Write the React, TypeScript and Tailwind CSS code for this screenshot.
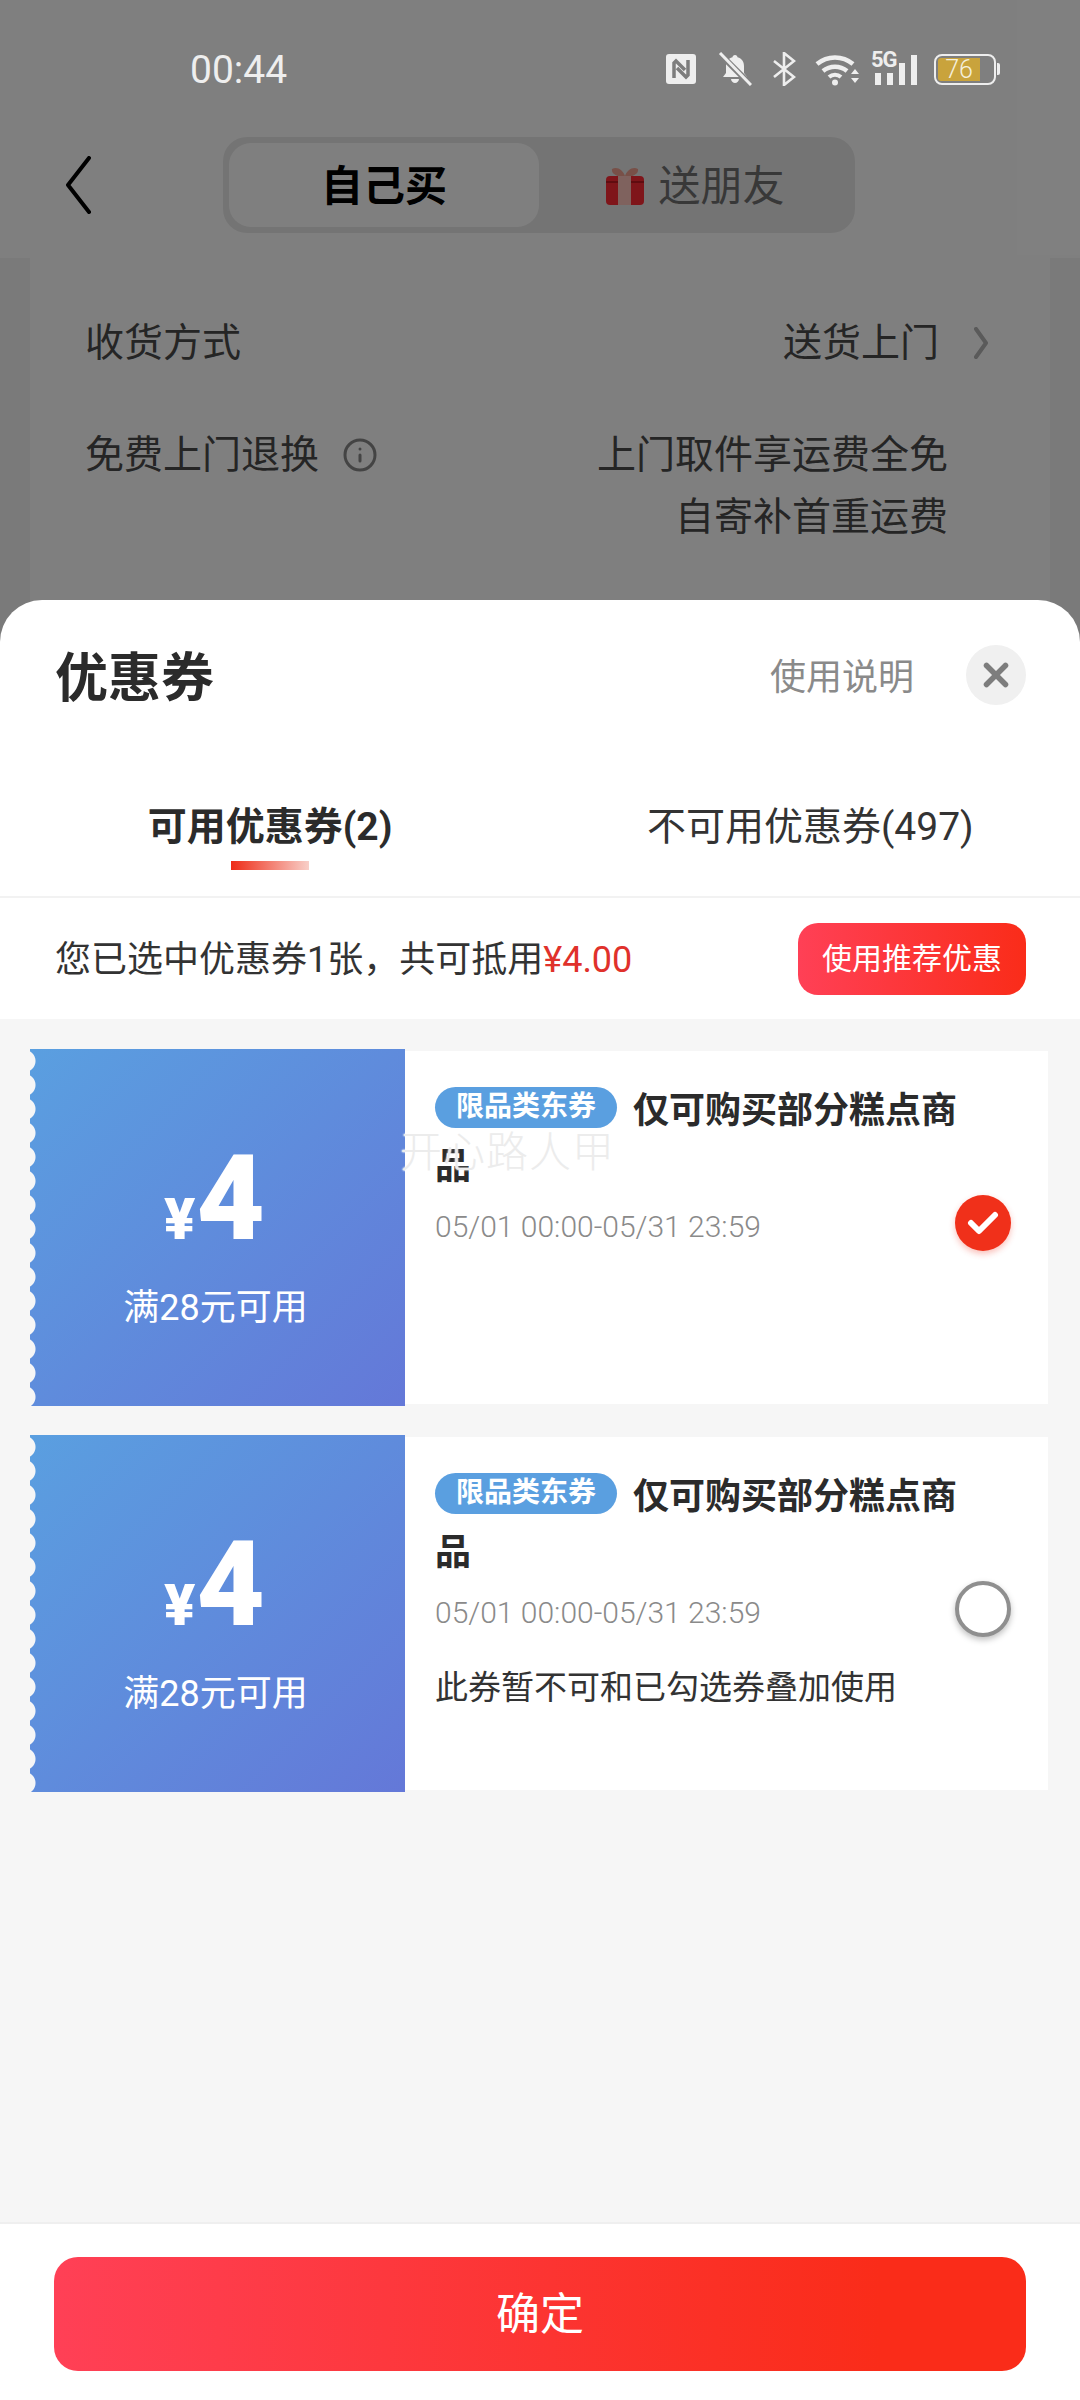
import { Info, X } from 'lucide-react'

const FONT = "font-['Roboto','Noto_Sans_CJK_SC',sans-serif]"

function StatusIcons() {
  return (
    <div className="flex items-center">
      {/* nfc */}
      <svg width="30" height="30" viewBox="0 0 30 30" className="mr-[22px]">
        <rect width="30" height="30" rx="3" fill="#eee" />
        <path d="M8 24V9l2-2 9 9M22 6v15l-2 2-9-9" fill="none" stroke="#7d7d7d" strokeWidth="3.500" />
      </svg>
      {/* bell off */}
      <svg width="34" height="34" viewBox="0 0 34 34" className="mr-[20px]">
        <path d="M17 3c1.500 0 2.500 1 2.500 2.300C24 6.500 26 10 26 14v7l3 4H5l3-4v-7c0-4 2-7.500 6.500-8.700C14.500 4 15.500 3 17 3z" fill="#eee" />
        <path d="M13 27h8c0 2-2 4-4 4s-4-2-4-4z" fill="#eee" />
        <path d="M1 1l32 32" stroke="#808080" strokeWidth="6" />
        <path d="M2 1l31 32" stroke="#eee" strokeWidth="3" />
      </svg>
      {/* bluetooth */}
      <svg width="24" height="34" viewBox="0 0 24 34" className="mr-[19px]">
        <path d="M2 9l20 16-10 8V1l10 8L2 25" fill="none" stroke="#eee" strokeWidth="2.600" />
      </svg>
      {/* wifi */}
      <svg width="44" height="34" viewBox="0 0 44 34" className="mr-[13px]">
        <path d="M2 12a28 28 0 0 1 36 0" fill="none" stroke="#eee" strokeWidth="4.500" />
        <path d="M8 19a19 19 0 0 1 24 0" fill="none" stroke="#eee" strokeWidth="4.500" />
        <path d="M14 25a9 9 0 0 1 12 0" fill="none" stroke="#eee" strokeWidth="4" />
        <circle cx="20" cy="30.500" r="3" fill="#eee" />
        <path d="M36 22h8l-4-5zM36 26h8l-4 5z" fill="#eee" />
      </svg>
      {/* 5g + signal */}
      <div className="relative w-[46px] h-[34px] mr-[16px]">
        <span className="absolute left-[-1px] top-[-2px] text-[22px] leading-[20px] font-bold text-[#eee] font-['Roboto',sans-serif] tracking-[-1px]">
          5G
        </span>
        <svg width="46" height="34" viewBox="0 0 46 34" className="absolute left-0 top-0">
          <rect x="3" y="21" width="6" height="12" fill="#eee" />
          <rect x="15" y="21" width="6" height="12" fill="#eee" />
          <rect x="27" y="11" width="6" height="22" fill="#eee" />
          <rect x="39" y="3" width="6" height="30" fill="#eee" />
        </svg>
      </div>
      {/* battery */}
      <div className="relative w-[66px] h-[31px] flex items-center">
        <div className="w-[62px] h-[31px] rounded-[8px] border-[2.500px] border-[#eee] p-[2px] flex">
          <div className="w-[42px] bg-[#c9a33c] rounded-l-[3px] flex items-center justify-center text-[25px] font-light text-[#f5f0dc] leading-none font-['Roboto',sans-serif]">
            76
          </div>
        </div>
        <div className="ml-[1px] w-[3px] h-[12px] rounded-r-[2px] bg-[#eee]" />
      </div>
    </div>
  )
}

function GiftIcon() {
  return (
    <svg width="38" height="38" viewBox="0 0 38 38">
      <path d="M19 10C11 10 5 7 6 2c5-3 11 1 13 7 2-6 8-10 13-7 1 5-5 8-13 8z" fill="#f0a090" />
      <rect x="0" y="9" width="38" height="29" rx="4" fill="#ff2a35" />
      <rect x="0" y="14" width="38" height="2" fill="#c01820" />
      <rect x="12" y="9" width="13" height="29" fill="#ffc4bc" />
    </svg>
  )
}

function BehindPage() {
  return (
    <div className="h-[2400px] bg-[#f5f5f5] flex flex-col">
      <div className="h-[258px] bg-white pt-[137px] flex items-start">
        <svg width="26" height="58" viewBox="0 0 26 58" className="ml-[65px] mt-[19px]">
          <path d="M24 2 3 29l21 27" fill="none" stroke="#000" strokeWidth="4" strokeLinecap="round" strokeLinejoin="round" />
        </svg>
        <div className="ml-[132px] w-[632px] h-[96px] rounded-[24px] bg-[#e9e9e9] p-[6px] flex items-start">
          <div className="w-[310px] h-[84px] pt-[2px] rounded-[22px] bg-white flex items-center justify-center text-[42px] font-bold text-black">
            自己买
          </div>
          <div className="flex-1 h-[84px] pt-[2px] pl-[3px] flex items-center justify-center gap-[14px] text-[42px] text-[#707070]">
            <GiftIcon />
            <span>送朋友</span>
          </div>
        </div>
      </div>
      <div className="mx-[30px] flex-1 bg-white px-[55px] pt-[60px] text-[39px] text-[#4a4a4a]">
        <div className="flex items-center justify-between h-[50px]">
          <span>收货方式</span>
          <div className="flex items-center">
            <span>送货上门</span>
            <svg width="15" height="32" viewBox="0 0 15 32" className="ml-[35px] mr-[6px]">
              <path d="M2 2l10 14L2 30" fill="none" stroke="#b4b4b4" strokeWidth="4" strokeLinecap="round" strokeLinejoin="round" />
            </svg>
          </div>
        </div>
        <div className="flex justify-between mt-[62px] pr-[47px]">
          <div className="flex items-center h-[50px]">
            <span>免费上门退换</span>
            <Info size={36} strokeWidth={2} className="ml-[23px] text-[#888]" />
          </div>
          <div className="text-right leading-[62px] mt-[-6px]">
            <div>上门取件享运费全免</div>
            <div>自寄补首重运费</div>
          </div>
        </div>
      </div>
    </div>
  )
}

function CouponCard({ checked, note, watermark }: { checked: boolean; note?: string; watermark?: boolean }) {
  return (
    <div className="relative h-[357px] ml-[30px] mr-[32px] flex">
      <div className="relative w-[375px] h-[357px] shrink-0 bg-[linear-gradient(135deg,#5a9fe0,#6478d8)] flex flex-col items-center text-white">
        <div className="absolute left-0 top-0 bottom-0 w-[7px] bg-[radial-gradient(circle_at_-5.500px_12px,#f6f6f6_10.500px,transparent_11.500px)] bg-[length:7px_24px]" />
        <div className="flex items-baseline mt-[100px] h-[110px] ml-[-6px]">
          <span className="text-[58px] font-black leading-none mr-[1px] font-['Roboto',sans-serif]">¥</span>
          <span className="text-[118px] font-black leading-[100px] font-['Roboto',sans-serif]">4</span>
        </div>
        <div className="text-[36px] leading-[44px] mt-[27px] ml-[-4px]">满28元可用</div>
      </div>
      <div className="flex-1 min-w-0 my-[2px] bg-white pl-[30px] pt-[32px] flex">
        <div className="flex-1 min-w-0">
          <div className="w-[524px] text-[36px] leading-[56px] font-bold text-[#2b2b2b]">
            <span className="inline-flex items-center justify-center align-[7px] w-[182px] h-[41px] rounded-full bg-[#5a9fe0] text-white text-[28px] leading-none mr-[16px]">
              限品类东券
            </span>
            仅可购买部分糕点商品
          </div>
          <div className="mt-[14px] text-[30px] leading-[36px] font-light text-[#8a8a8a]">05/01 00:00-05/31 23:59</div>
          {note && <div className="mt-[35px] text-[33px] leading-[44px] text-[#333]">{note}</div>}
        </div>
        <div className="w-[93px] shrink-0 flex items-center mb-[41px]">
          {checked ? (
            <div className="w-[56px] h-[56px] rounded-full bg-[#f0301a] shadow-[0_3px_6px_rgba(240,48,26,0.3)] flex items-center justify-center">
              <svg width="32" height="26" viewBox="0 0 32 26">
                <path d="M4 13l8 8L28 5" fill="none" stroke="#fff" strokeWidth="6" strokeLinecap="round" strokeLinejoin="round" />
              </svg>
            </div>
          ) : (
            <div className="w-[56px] h-[56px] rounded-full bg-white border-[4px] border-[#8f8f8f] shadow-[0_3px_6px_rgba(0,0,0,0.25)]" />
          )}
        </div>
      </div>
      {watermark && (
        <div className="absolute left-[370px] top-[79px] text-[42px] leading-[50px] tracking-[1px] font-light text-[#ececec] [text-shadow:0_0_2px_#fff,0_0_2px_#fff]">
          开心路人甲
        </div>
      )}
    </div>
  )
}

function CouponSheet() {
  return (
    <div className="absolute left-0 right-0 top-[600px] bottom-0 bg-white rounded-t-[42px] flex flex-col">
      <div className="h-[150px] pl-[55px] pr-[54px] pt-[45px] flex items-start justify-between">
        <div className="mt-[4px] text-[53px] leading-[60px] font-bold text-[#2b2b2b]">优惠券</div>
        <div className="flex items-start">
          <span className="mt-[3px] text-[36px] leading-[60px] text-[#8a8a8a]">使用说明</span>
          <div className="ml-[52px] w-[60px] h-[60px] rounded-full bg-[#f0f0f0] flex items-center justify-center">
            <X size={38} strokeWidth={3.500} className="text-[#7d7d7d]" />
          </div>
        </div>
      </div>
      <div className="h-[148px] flex items-start border-b-2 border-[#f2f2f2] pt-[52px] text-[39px] leading-[50px]">
        <div className="ml-[148px] w-[244px] flex flex-col items-center font-bold text-[#2b2b2b]">
          <span className="whitespace-nowrap">可用优惠券(2)</span>
          <div className="mt-[9px] w-[78px] h-[9px] bg-[linear-gradient(90deg,#ee2c17,#f8cfc8)]" />
        </div>
        <div className="ml-[255px] whitespace-nowrap text-[#333]">不可用优惠券(497)</div>
      </div>
      <div className="h-[121px] px-[55px] flex items-center justify-between">
        <div className="mt-[3px] text-[36px] text-[#333]">
          您已选中优惠券1张，共可抵用<span className="text-[#e0312b]">¥4.00</span>
        </div>
        <div className="w-[228px] h-[72px] mr-[-1px] rounded-[20px] bg-[linear-gradient(90deg,#ff4056,#fa2c19)] flex items-center justify-center text-[30px] text-white">
          使用推荐优惠
        </div>
      </div>
      <div className="flex-1 bg-[#f6f6f6] pt-[30px] flex flex-col gap-[29px]">
        <CouponCard checked watermark />
        <CouponCard checked={false} note="此券暂不可和已勾选券叠加使用" />
      </div>
      <div className="h-[178px] bg-white border-t-2 border-[#efefef] px-[54px] pt-[33px]">
        <div className="h-[114px] pt-[2px] rounded-[24px] bg-[linear-gradient(90deg,#ff4056,#fa2c19_85%)] flex items-center justify-center text-[44px] text-white">
          确定
        </div>
      </div>
    </div>
  )
}

export default function App() {
  return (
    <div className={`relative w-[1080px] h-[2400px] overflow-hidden ${FONT}`}>
      <BehindPage />
      <div className="absolute inset-0 bg-black/50" />
      <div className="absolute left-0 right-0 top-0 h-[100px] pl-[190px] pr-[80px] pt-[48px] flex items-start justify-between">
        <span className="text-[39px] leading-[44px] text-[#eee]">00:44</span>
        <div className="mt-[4px]">
          <StatusIcons />
        </div>
      </div>
      <CouponSheet />
    </div>
  )
}
